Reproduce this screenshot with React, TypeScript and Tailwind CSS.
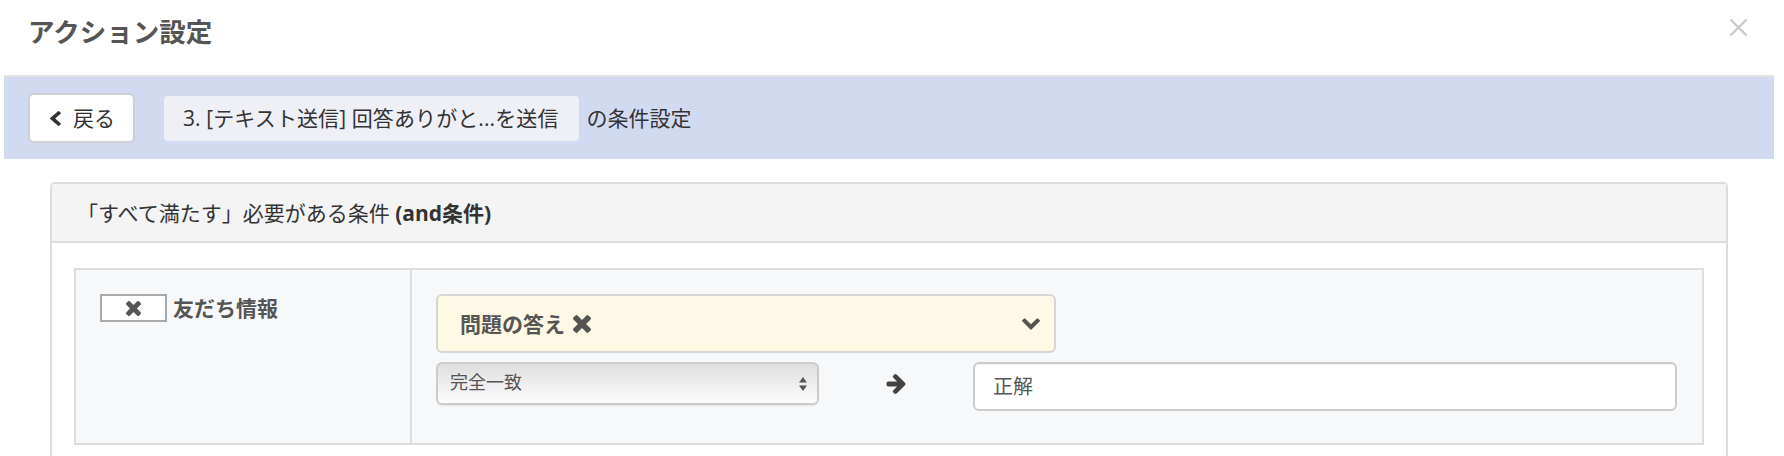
// Font Awesome 4 glyph shapes, drawn inline
function TimesIcon({ className }: { className?: string }) {
  return (
    <svg className={className} viewBox="302 366 1188 1188" fill="currentColor">
      <path d="M1490 1322q0 40-28 68l-136 136q-28 28-68 28t-68-28l-294-294-294 294q-28 28-68 28t-68-28l-136-136q-28-28-28-68t28-68l294-294-294-294q-28-28-28-68t28-68l136-136q28-28 68-28t68 28l294 294 294-294q28-28 68-28t68 28l136 136q28 28 28 68t-28 68l-294 294 294 294q28 28 28 68z" />
    </svg>
  )
}

function ChevronLeftIcon({ className }: { className?: string }) {
  return (
    <svg className={className} viewBox="410 26 1036 1612" preserveAspectRatio="none" fill="currentColor">
      <path d="M1427 301l-531 531 531 531q19 19 19 45t-19 45l-166 166q-19 19-45 19t-45-19l-742-742q-19-19-19-45t19-45l742-742q19-19 45-19t45 19l166 166q19 19 19 45t-19 45z" />
    </svg>
  )
}

function ChevronDownIcon({ className }: { className?: string }) {
  return (
    <svg className={className} viewBox="90 533 1612 1035" fill="currentColor">
      <path d="M1683 808l-742 741q-19 19-45 19t-45-19l-742-741q-19-19-19-45.5t19-45.5l166-165q19-19 45-19t45 19l531 531 531-531q19-19 45-19t45 19l166 165q19 19 19 45.5t-19 45.5z" />
    </svg>
  )
}

function ArrowRightIcon({ className }: { className?: string }) {
  return (
    <svg className={className} viewBox="128 181 1472 1558" fill="currentColor">
      <path d="M1600 960q0 54-37 91l-651 651q-39 37-91 37-51 0-90-37l-75-75q-38-38-38-91t38-91l293-293h-704q-52 0-84.5-37.5t-32.5-90.5v-128q0-53 32.5-90.5t84.5-37.5h704l-293-294q-38-36-38-90t38-90l75-75q38-38 90-38 53 0 91 38l651 651q37 35 37 90z" />
    </svg>
  )
}

export default function App() {
  return (
    <div className="min-h-[456px] w-full bg-white font-['Open_Sans','Noto_Sans_CJK_JP',sans-serif] text-[#333]">
      <div className="ml-[4px] mr-[10px]">
        {/* modal title */}
        <div className="flex h-[75px] items-start justify-between">
          <h1 className="pl-[24px] pt-[14px] text-[26.5px] font-bold leading-[36px] text-[#555]">アクション設定</h1>
          <button className="mr-[26px] mt-[18px]" aria-label="close">
            <svg width="19" height="19" viewBox="0 0 19 19">
              <path d="M1.5 1.5 L17.5 17.5 M17.5 1.5 L1.5 17.5" stroke="#cbcbcb" strokeWidth="2.4" />
            </svg>
          </button>
        </div>

        {/* breadcrumb bar */}
        <div className="flex items-center border-t-2 border-[#e3e3e3] bg-[#d2daf2] px-[24px] py-[16px]">
          <button className="flex h-[50px] w-[107px] items-center rounded-[6px] border-2 border-[#cfcfcf] bg-white pl-[20px] text-[21px] leading-[28px] text-[#333]">
            <ChevronLeftIcon className="h-[15px] w-[11px] text-[#333]" />
            <span className="ml-[12px]">戻る</span>
          </button>
          <div className="ml-[29px] flex h-[45px] items-center rounded-[4px] bg-[#eff0f6] pl-[19px] pr-[20px] text-[21px] leading-[28px] tracking-[0.1px]">
            3. [テキスト送信] 回答ありがと...を送信
          </div>
          <span className="ml-[8px] text-[21px] leading-[28px]">の条件設定</span>
        </div>

        {/* condition panel */}
        <div className="mx-[46px] mt-[23px] rounded-t-[5px] border-2 border-b-0 border-[#dddddd]">
          <div className="h-[59px] border-b-2 border-[#dddddd] bg-[#f4f4f4] pl-[25px] pt-[15px] text-[21px] leading-[28px]">
            「すべて満たす」必要がある条件 <span className="font-bold">(and条件)</span>
          </div>

          <div className="px-[22px] pt-[25px]">
            <div className="flex border-2 border-[#dddddd] bg-[#f7f8fa]">
              <div className="flex w-[336px] items-start border-r-2 border-[#dddddd] pl-[24px] pt-[24px]">
                <div className="flex h-[28px] w-[67px] items-center justify-center border-2 border-[#aaaaaa] bg-white">
                  <TimesIcon className="h-[15px] w-[15px] text-[#555]" />
                </div>
                <span className="ml-[6px] text-[21px] font-bold leading-[28px] text-[#555]">友だち情報</span>
              </div>

              <div className="flex-1 pb-[32px] pl-[24px] pr-[25px] pt-[24px]">
                <div className="flex h-[59px] w-[620px] items-center justify-between rounded-[6px] border-2 border-[#d6d6d6] bg-[#fef9e4] pl-[22px] pr-[14px]">
                  <div className="flex items-center">
                    <span className="text-[21px] font-bold leading-[28px] text-[#555]">問題の答え</span>
                    <TimesIcon className="ml-[8px] h-[18px] w-[18px] text-[#555]" />
                  </div>
                  <ChevronDownIcon className="h-[12px] w-[18px] text-[#555]" />
                </div>

                <div className="mt-[9px] flex items-start">
                  <div className="flex h-[43px] w-[383px] items-center justify-between rounded-[6px] border-2 border-[#cccccc] bg-gradient-to-b from-[#dedede] to-[#fdfdfd] pl-[12px] pr-[10px] shadow-[0_1px_1px_rgba(0,0,0,0.08)]">
                    <span className="-mt-[3px] text-[18px] leading-[24px] text-[#555]">完全一致</span>
                    <svg width="8" height="14" viewBox="0 0 8 14">
                      <path d="M4 0 L8 5.5 L0 5.5 Z M0 8.5 L8 8.5 L4 14 Z" fill="#555" />
                    </svg>
                  </div>
                  <div className="flex h-[43px] flex-1 items-center justify-center">
                    <ArrowRightIcon className="h-[20px] w-[20px] text-[#444]" />
                  </div>
                  <div className="flex h-[49px] w-[704px] items-center rounded-[6px] border-2 border-[#cccccc] bg-white pl-[18px] text-[20px] leading-[28px] text-[#555] shadow-[inset_0_1px_1px_rgba(0,0,0,0.06)]">
                    正解
                  </div>
                </div>
              </div>
            </div>
          </div>
          <div className="h-[40px]" />
        </div>
      </div>
    </div>
  )
}
